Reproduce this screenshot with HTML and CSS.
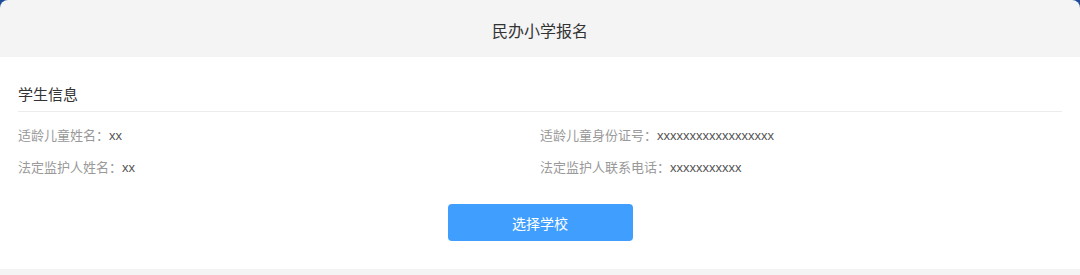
FILE: index.html
```html
<!DOCTYPE html>
<html lang="zh-CN">
<head>
<meta charset="utf-8">
<title>民办小学报名</title>
<link rel="stylesheet" href="styles.css">
</head>
<body>
<div class="card">
  <header class="header">民办小学报名</header>
  <section class="content">
    <h2 class="section-title">学生信息</h2>
    <div class="info-grid">
      <div class="info-item"><span class="label">适龄儿童姓名：</span><span class="value">xx</span></div>
      <div class="info-item"><span class="label">适龄儿童身份证号：</span><span class="value">xxxxxxxxxxxxxxxxxx</span></div>
      <div class="info-item"><span class="label">法定监护人姓名：</span><span class="value">xx</span></div>
      <div class="info-item"><span class="label">法定监护人联系电话：</span><span class="value">xxxxxxxxxxx</span></div>
    </div>
    <div class="actions"><button class="btn-primary" type="button">选择学校</button></div>
  </section>
</div>
</body>
</html>
```

FILE: styles.css
```css
html, body {
  margin: 0;
  padding: 0;
}
body {
  background: #1d4b99;
  font-family: "Liberation Sans", "Noto Sans CJK SC", sans-serif;
  height: 275px;
  overflow: hidden;
}
.card {
  background: #f4f4f4;
  border-radius: 8px 8px 0 0;
  overflow: hidden;
  height: 275px;
}
.header {
  height: 57px;
  display: flex;
  align-items: center;
  justify-content: center;
  font-size: 16px;
  color: #333;
  padding-top: 2px;
  box-sizing: border-box;
}
.content {
  background: #fff;
  height: 212px;
  box-sizing: border-box;
  padding: 28px 18px 0;
}
.section-title {
  margin: 0;
  font-size: 15px;
  font-weight: normal;
  line-height: 20px;
  color: #333;
  padding-bottom: 6px;
  border-bottom: 1px solid #ececec;
}
.info-grid {
  display: grid;
  grid-template-columns: 1fr 1fr;
  row-gap: 12px;
  margin-top: 14px;
}
.info-item {
  font-size: 13px;
  line-height: 20px;
}
.label {
  color: #999;
}
.value {
  color: #555;
}
.actions {
  display: flex;
  justify-content: center;
  margin-top: 26px;
}
.btn-primary {
  width: 185px;
  height: 37px;
  border: none;
  border-radius: 4px;
  background: #409eff;
  color: #fff;
  font-family: "Liberation Sans", "Noto Sans CJK SC", sans-serif;
  font-size: 14px;
  padding: 0;
}
```
